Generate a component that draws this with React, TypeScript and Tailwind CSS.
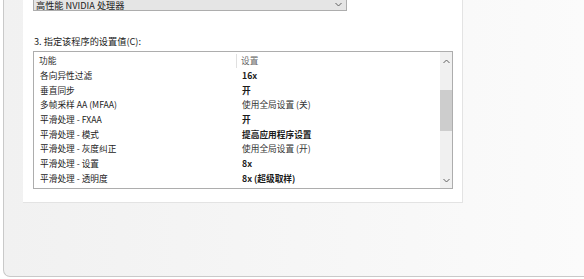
import React from "react";

const rows: { f: string; v: string; b: boolean }[] = [
  { f: "各向异性过滤", v: "16x", b: true },
  { f: "垂直同步", v: "开", b: true },
  { f: "多帧采样 AA (MFAA)", v: "使用全局设置 (关)", b: false },
  { f: "平滑处理 - FXAA", v: "开", b: true },
  { f: "平滑处理 - 模式", v: "提高应用程序设置", b: true },
  { f: "平滑处理 - 灰度纠正", v: "使用全局设置 (开)", b: false },
  { f: "平滑处理 - 设置", v: "8x", b: true },
  { f: "平滑处理 - 透明度", v: "8x (超级取样)", b: true },
  { f: "背景应用程序最大帧速率", v: "使用全局设置 (关)", b: false },
];

function Chevron({ up }: { up?: boolean }) {
  return (
    <svg width="7" height="5" viewBox="0 0 7 5" className="block">
      <path
        d={up ? "M0.5 4 L3.5 1 L6.5 4" : "M0.5 1 L3.5 4 L6.5 1"}
        fill="none"
        stroke="#606060"
        strokeWidth="1"
      />
    </svg>
  );
}

export default function App() {
  return (
    <div
      className="w-[584px] h-[279px] overflow-hidden bg-white text-[#1b1b1b]"
      style={{ fontFamily: '"Noto Sans CJK SC", "Noto Sans", sans-serif' }}
    >
      <div className="ml-[3px] h-[277px] border-l border-b border-[#c9c9c9] rounded-bl-[7px] overflow-hidden flex bg-gradient-to-r from-[#f1f1f1] to-[#fbfbfb]">
        <div className="w-[459px] shrink-0 pl-[19px]">
          <div className="w-[440px] h-[203px] bg-white border-r border-b border-[#e3e3e3] pl-[10px] flex flex-col">
            <div className="w-[314px] h-[22px] -mt-[11px] bg-[#e5e5e5] border border-[#adadad] flex items-end justify-between pl-[2px] pr-[4px]">
              <span className="text-[9.2px] leading-[12px] mb-[-1px]">高性能 NVIDIA 处理器</span>
              <span className="mb-[3px]">
                <Chevron />
              </span>
            </div>
            <div className="mt-[24px] text-[9.2px] leading-[13px] pl-[1px]">
              3. 指定该程序的设置值(C):
            </div>
            <div className="mt-[3px] w-[420px] h-[138px] border border-[#adadad] bg-white flex">
              <div className="flex-1 overflow-hidden pt-[1.5px] text-[8.7px]">
                <div className="h-[14.7px] flex items-center">
                  <div className="w-[203px] h-full flex items-center pl-[5px] text-[#333] border-r border-[#e0e0e0]">
                    功能
                  </div>
                  <div className="pl-[4px] text-[#666]">设置</div>
                </div>
                {rows.map((r, i) => (
                  <div key={i} className="h-[14.7px] flex items-center whitespace-nowrap">
                    <div className="w-[203px] pl-[6px]">{r.f}</div>
                    <div className={"pl-[5px] " + (r.b ? "font-bold" : "text-[#333]")}>
                      {r.v}
                    </div>
                  </div>
                ))}
              </div>
              <div className="w-[12px] h-full bg-[#f0f0f0] flex flex-col items-center">
                <div className="h-[14px] flex items-center justify-center mt-[2px]">
                  <Chevron up />
                </div>
                <div className="mt-[22px] w-full h-[41px] bg-[#cdcdcd]" />
                <div className="flex-1" />
                <div className="h-[14px] flex items-center justify-center mb-[1px]">
                  <Chevron />
                </div>
              </div>
            </div>
          </div>
        </div>
        <div className="flex-1" />
      </div>
    </div>
  );
}
